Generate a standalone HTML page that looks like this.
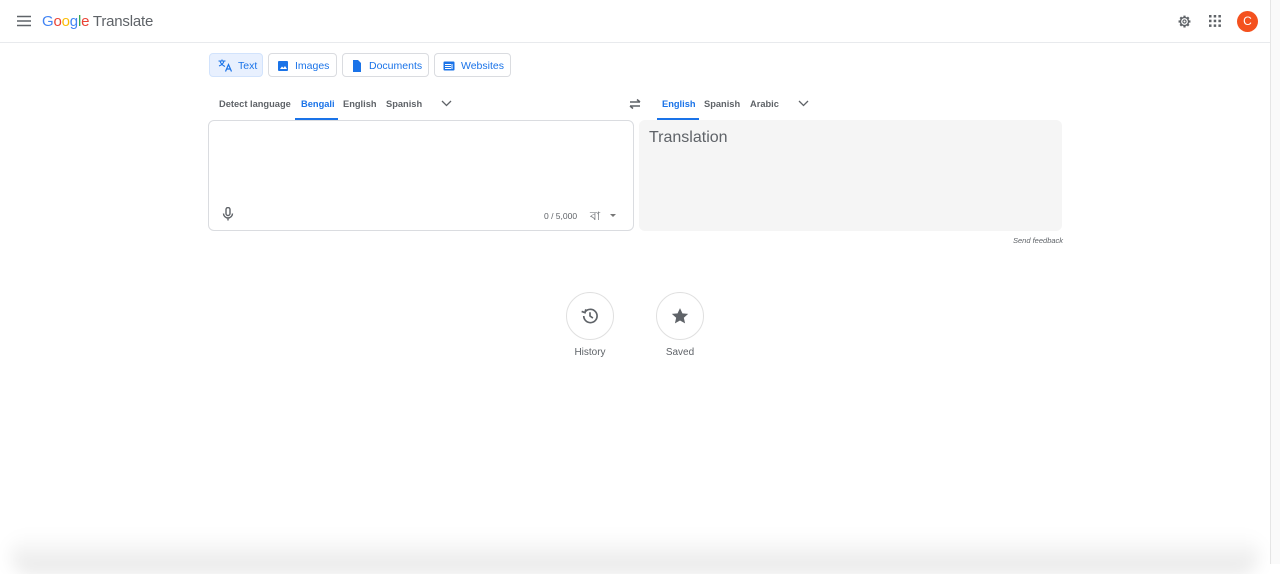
<!DOCTYPE html>
<html><head><meta charset="utf-8"><style>
*{box-sizing:border-box;margin:0;padding:0}
body{width:1280px;height:564px;overflow:hidden;background:#fff;font-family:"Liberation Sans",Arial,sans-serif;color:#5f6368;position:relative}
.hdr{position:absolute;left:0;top:0;width:1270px;height:43px;border-bottom:1px solid #e8eaed}
.sb{position:absolute;right:0;top:0;width:10px;height:564px;background:#fafafa;border-left:1px solid #e6e6e6}
.abs{position:absolute}
.btn{position:absolute;top:53px;height:24px;border:1px solid #dadce0;border-radius:4px;font-size:10.5px;color:#1a73e8;display:flex;align-items:center;padding-left:8px;gap:6px;white-space:nowrap;padding-top:1px}
.tab{position:absolute;top:99px;font-size:9.3px;font-weight:bold;color:#5f6368;white-space:nowrap}
.blue{color:#1a73e8}
.circ{position:absolute;top:292px;width:48px;height:48px;border:1px solid #e0e0e0;border-radius:50%;display:flex;align-items:center;justify-content:center}
.lbl{position:absolute;top:347px;font-size:10px;color:#5f6368;width:60px;text-align:center}
</style></head><body>
<div class="hdr"></div>
<div class="sb"></div>
<svg class="abs" style="left:17px;top:15px" width="14" height="12" viewBox="0 0 14 12"><path d="M0 1.5h14M0 6h14M0 10.5h14" stroke="#5f6368" stroke-width="1.5"/></svg>
<div class="abs" style="left:42px;top:13px;font-size:15px;letter-spacing:-0.2px"><span style="color:#4285f4">G</span><span style="color:#ea4335">o</span><span style="color:#fbbc05">o</span><span style="color:#4285f4">g</span><span style="color:#34a853">l</span><span style="color:#ea4335">e</span><span style="color:#5f6368"> Translate</span></div>
<svg class="abs" style="left:1177px;top:14px" width="15" height="15" viewBox="0 0 24 24"><circle cx="12" cy="12" r="6.5" fill="none" stroke="#5f6368" stroke-width="2.2"/><g stroke="#5f6368" stroke-width="3.5" stroke-linecap="butt"><path d="M12 2.5v3M12 18.5v3M2.5 12h3M18.5 12h3M5.3 5.3l2.1 2.1M16.6 16.6l2.1 2.1M5.3 18.7l2.1-2.1M16.6 7.4l2.1-2.1"/></g><circle cx="12" cy="12" r="2.5" fill="none" stroke="#5f6368" stroke-width="1.8"/></svg>
<svg class="abs" style="left:1209px;top:15px" width="12" height="12" viewBox="0 0 12 12" fill="#5f6368"><rect x="0" y="0" width="2.5" height="2.5"/><rect x="4.7" y="0" width="2.5" height="2.5"/><rect x="9.4" y="0" width="2.5" height="2.5"/><rect x="0" y="4.7" width="2.5" height="2.5"/><rect x="4.7" y="4.7" width="2.5" height="2.5"/><rect x="9.4" y="4.7" width="2.5" height="2.5"/><rect x="0" y="9.4" width="2.5" height="2.5"/><rect x="4.7" y="9.4" width="2.5" height="2.5"/><rect x="9.4" y="9.4" width="2.5" height="2.5"/></svg>
<div class="abs" style="left:1237px;top:11px;width:21px;height:21px;border-radius:50%;background:#f4511e;color:#fff;font-size:12px;text-align:center;line-height:21px">C</div>

<div class="btn" style="left:209px;width:54px;background:#e8f0fe;border-color:#d2e3fc"><svg width="14" height="13" viewBox="0 0 14 13"><path d="M0.5 2h7M4 0.5V2M2 2c0.5 2 2 4 5 5.5M6 2c-0.5 2-2 4-5 5" stroke="#1a73e8" stroke-width="1.1" fill="none"/><path d="M7.5 12.5l3-7 3 7M8.6 10h3.8" stroke="#1a73e8" stroke-width="1.2" fill="none"/></svg>Text</div>
<div class="btn" style="left:268px;width:69px"><svg width="12" height="12" viewBox="0 0 12 12"><rect x="1" y="1" width="10" height="10" rx="1" fill="#1a73e8"/><path d="M3 9l2-2.5 1.5 1.5 1.5-2 2 3z" fill="#fff"/></svg>Images</div>
<div class="btn" style="left:342px;width:87px"><svg width="12" height="12" viewBox="0 0 12 12"><path d="M2 0h5l3 3v9H2z" fill="#1a73e8"/></svg>Documents</div>
<div class="btn" style="left:434px;width:77px"><svg width="12" height="12" viewBox="0 0 12 12"><rect x="0.5" y="1.5" width="11" height="9" rx="1" fill="#1a73e8"/><path d="M2 4.5h6M2 6.5h6M2 8.5h6M9 4v5" stroke="#fff" stroke-width="1"/></svg>Websites</div>

<div class="tab" style="left:219px">Detect language</div>
<div class="tab blue" style="left:301px">Bengali</div>
<div class="abs" style="left:295px;top:118px;width:43px;height:2px;background:#1a73e8"></div>
<div class="tab" style="left:343px">English</div>
<div class="tab" style="left:386px">Spanish</div>
<svg class="abs" style="left:441px;top:100px" width="11" height="7" viewBox="0 0 11 7"><path d="M1 1l4.5 4.5L10 1" stroke="#5f6368" stroke-width="1.3" fill="none"/></svg>
<svg class="abs" style="left:628px;top:98px" width="14" height="12" viewBox="0 0 14 12"><path d="M2 4h10M9 1.5L12 4M12 8H2M5 10.5L2 8" stroke="#5f6368" stroke-width="1.5" fill="none"/></svg>
<div class="tab blue" style="left:662px">English</div>
<div class="abs" style="left:657px;top:118px;width:42px;height:2px;background:#1a73e8"></div>
<div class="tab" style="left:704px">Spanish</div>
<div class="tab" style="left:750px">Arabic</div>
<svg class="abs" style="left:798px;top:100px" width="11" height="7" viewBox="0 0 11 7"><path d="M1 1l4.5 4.5L10 1" stroke="#5f6368" stroke-width="1.3" fill="none"/></svg>

<div class="abs" style="left:208px;top:120px;width:426px;height:111px;border:1px solid #dadce0;border-radius:6px"></div>
<svg class="abs" style="left:222px;top:207px" width="12" height="14" viewBox="0 0 12 14"><rect x="4" y="0.5" width="4" height="8" rx="2" fill="none" stroke="#5f6368" stroke-width="1.4"/><path d="M1.5 6.5a4.5 4.5 0 009 0M6 11v2.5" stroke="#5f6368" stroke-width="1.4" fill="none"/></svg>
<div class="abs" style="left:544px;top:211px;font-size:8.5px">0 / 5,000</div>
<div class="abs" style="left:590px;top:208px;font-size:12px;font-family:'Liberation Sans','Noto Sans CJK SC',sans-serif">বা</div>
<div class="abs" style="left:610px;top:214px;width:0;height:0;border-left:3px solid transparent;border-right:3px solid transparent;border-top:3px solid #777"></div>
<div class="abs" style="left:639px;top:120px;width:423px;height:111px;background:#f5f5f5;border-radius:6px"></div>
<div class="abs" style="left:649px;top:129px;font-size:16px;color:#5f6368">Translation</div>
<div class="abs" style="left:1013px;top:236px;font-size:7.5px;font-style:italic;color:#5f6368">Send feedback</div>

<div class="circ" style="left:566px"><svg width="20" height="20" viewBox="0 0 24 24"><path d="M4.5 12a8 8 0 108-8 8 8 0 00-6.5 3.3" stroke="#5f6368" stroke-width="2" fill="none"/><path d="M2 6.5l4 1.5 1-4" stroke="#5f6368" stroke-width="2" fill="none"/><path d="M12 7.5V12l3.5 2.5" stroke="#5f6368" stroke-width="2" fill="none"/></svg></div>
<div class="lbl" style="left:560px">History</div>
<div class="circ" style="left:656px"><svg width="20" height="20" viewBox="0 0 24 24"><path fill="#5f6368" d="M12 2.5l2.9 6.3 6.9.7-5.2 4.6 1.5 6.8L12 17.4l-6.1 3.5 1.5-6.8L2.2 9.5l6.9-.7z"/></svg></div>
<div class="lbl" style="left:650px">Saved</div>
<div class="abs" style="left:10px;top:534px;width:1250px;height:40px;background:linear-gradient(to bottom,rgba(0,0,0,0),rgba(0,0,0,0.1));filter:blur(8px);border-radius:30px"></div>
</body></html>
